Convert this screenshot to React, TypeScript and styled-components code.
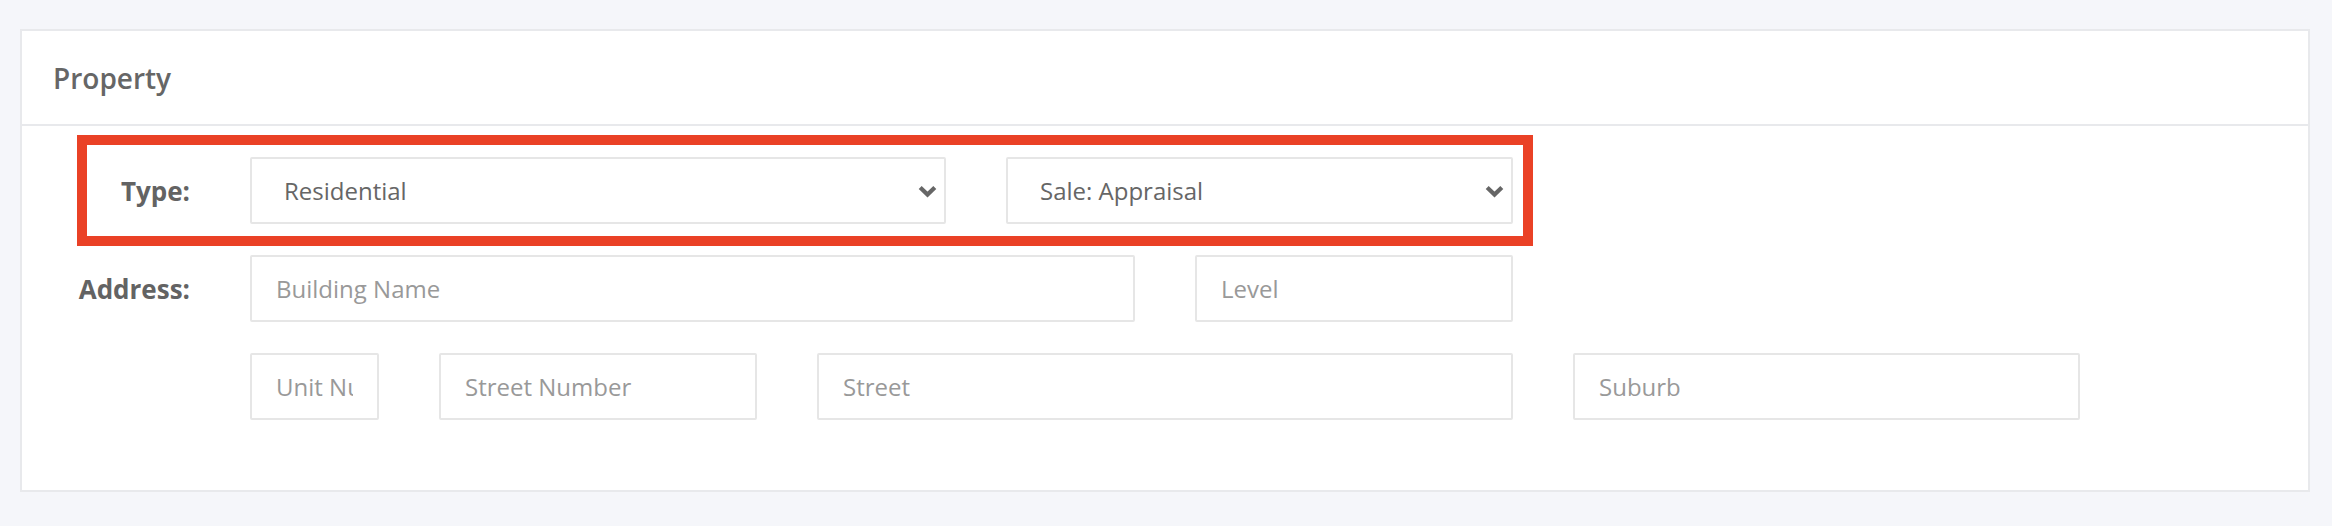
import React from "react";
import styled, { createGlobalStyle } from "styled-components";

const GlobalStyle = createGlobalStyle`
  html, body {
    margin: 0;
    padding: 0;
    background: #f5f6fa;
    font-family: "Open Sans", "Noto Sans", sans-serif;
  }
  * { box-sizing: border-box; }
`;

const Page = styled.div`
  padding: 29px 22px 34px 20px;
`;

const Card = styled.section`
  background: #ffffff;
  border: 2px solid #e8e9ec;
`;

const CardHeader = styled.header`
  height: 95px;
  display: flex;
  align-items: center;
  padding: 0 31px;
  border-bottom: 2px solid #e8e9ec;
  font-size: 28px;
  font-weight: 600;
  color: #666666;
`;

const CardBody = styled.div`
  position: relative;
  padding: 31px 0 70px;
  display: flex;
  flex-direction: column;
  gap: 31px;
`;

const FormRow = styled.div`
  display: grid;
  grid-template-columns: 168px 1fr;
  column-gap: 60px;
  align-items: start;
`;

const Label = styled.label`
  height: 67px;
  display: flex;
  align-items: center;
  justify-content: flex-end;
  font-size: 26px;
  font-weight: 700;
  color: #636363;
`;

const Fields = styled.div`
  display: grid;
  grid-template-columns: repeat(10, 129px);
  column-gap: 60px;
  row-gap: 31px;
`;

const Field = styled.div<{ $span: number; $start?: number }>`
  position: relative;
  grid-column: ${(p) => (p.$start ? `${p.$start} / ` : "")}span ${(p) => p.$span};
`;

const TextInput = styled.input`
  display: block;
  width: 100%;
  height: 67px;
  border: 2px solid #e6e6e6;
  border-radius: 2px;
  padding: 0 24px;
  font-family: "Open Sans", "Noto Sans", sans-serif;
  font-size: 24px;
  color: #666666;
  background: #ffffff;
  outline: none;
  &::placeholder {
    color: #999999;
  }
`;

const Select = styled.select`
  display: block;
  width: 100%;
  height: 67px;
  border: 2px solid #e6e6e6;
  border-radius: 2px;
  padding: 0 40px 0 32px;
  font-family: "Open Sans", "Noto Sans", sans-serif;
  font-size: 24px;
  color: #666666;
  background: #ffffff;
  appearance: none;
  -webkit-appearance: none;
  outline: none;
`;

const Chevron = styled.svg`
  position: absolute;
  right: 9px;
  top: 28px;
  width: 19px;
  height: 13px;
  pointer-events: none;
`;

const Highlight = styled.div`
  position: absolute;
  left: 55px;
  top: 9px;
  width: 1456px;
  height: 111px;
  border: 10px solid #ea4126;
  pointer-events: none;
`;

const ChevronDown = () => (
  <Chevron viewBox="0 0 19 13" aria-hidden="true">
    <path d="M2.2 2.4 L9.5 9.6 L16.8 2.4" fill="none" stroke="#666666" strokeWidth="4.2" strokeLinejoin="miter" />
  </Chevron>
);

export default function App() {
  return (
    <>
      <GlobalStyle />
      <Page>
        <Card>
          <CardHeader>Property</CardHeader>
          <CardBody>
            <FormRow>
              <Label>Type:</Label>
              <Fields>
                <Field $span={4}>
                  <Select defaultValue="Residential">
                    <option>Residential</option>
                    <option>Commercial</option>
                    <option>Rural</option>
                  </Select>
                  <ChevronDown />
                </Field>
                <Field $span={3}>
                  <Select defaultValue="Sale: Appraisal">
                    <option>Sale: Appraisal</option>
                    <option>Sale: Listing</option>
                    <option>Lease</option>
                  </Select>
                  <ChevronDown />
                </Field>
              </Fields>
            </FormRow>
            <FormRow>
              <Label>Address:</Label>
              <Fields>
                <Field $span={5}>
                  <TextInput placeholder="Building Name" />
                </Field>
                <Field $span={2}>
                  <TextInput placeholder="Level" />
                </Field>
                <Field $span={1} $start={1}>
                  <TextInput placeholder="Unit Number" />
                </Field>
                <Field $span={2}>
                  <TextInput placeholder="Street Number" />
                </Field>
                <Field $span={4}>
                  <TextInput placeholder="Street" />
                </Field>
                <Field $span={3}>
                  <TextInput placeholder="Suburb" />
                </Field>
              </Fields>
            </FormRow>
            <Highlight />
          </CardBody>
        </Card>
      </Page>
    </>
  );
}
